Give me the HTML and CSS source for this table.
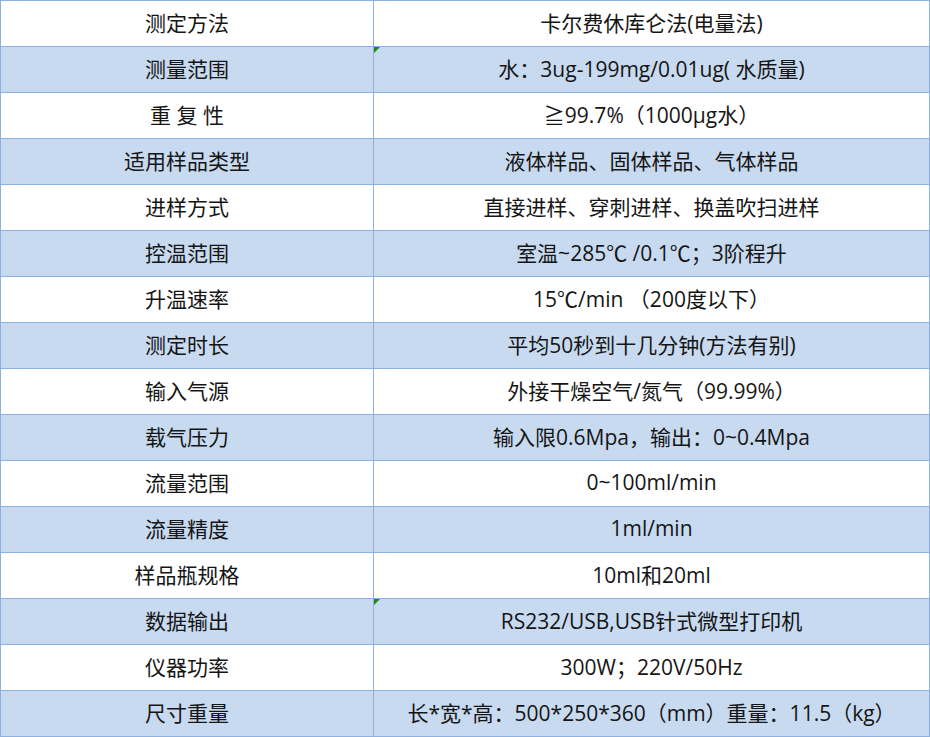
FILE: index.html
```html
<!DOCTYPE html>
<html lang="zh-CN">
<head>
<meta charset="utf-8">
<title>参数表</title>
<link rel="stylesheet" href="styles.css">
</head>
<body>
<div class="spec">
  <div class="cell">测定方法</div><div class="cell">卡尔费休库仑法(电量法)</div>
  <div class="cell alt">测量范围</div><div class="cell alt mark">水：3ug-199mg/0.01ug( 水质量)</div>
  <div class="cell">重 复 性</div><div class="cell">≧99.7%（1000μg水）</div>
  <div class="cell alt">适用样品类型</div><div class="cell alt">液体样品、固体样品、气体样品</div>
  <div class="cell">进样方式</div><div class="cell">直接进样、穿刺进样、换盖吹扫进样</div>
  <div class="cell alt">控温范围</div><div class="cell alt">室温~285℃ /0.1℃；3阶程升</div>
  <div class="cell">升温速率</div><div class="cell">15℃/min （200度以下）</div>
  <div class="cell alt">测定时长</div><div class="cell alt">平均50秒到十几分钟(方法有别)</div>
  <div class="cell">输入气源</div><div class="cell">外接干燥空气/氮气（99.99%）</div>
  <div class="cell alt">载气压力</div><div class="cell alt">输入限0.6Mpa，输出：0~0.4Mpa</div>
  <div class="cell">流量范围</div><div class="cell">0~100ml/min</div>
  <div class="cell alt">流量精度</div><div class="cell alt">1ml/min</div>
  <div class="cell">样品瓶规格</div><div class="cell">10ml和20ml</div>
  <div class="cell alt">数据输出</div><div class="cell alt mark">RS232/USB,USB针式微型打印机</div>
  <div class="cell">仪器功率</div><div class="cell">300W；220V/50Hz</div>
  <div class="cell alt">尺寸重量</div><div class="cell alt">长*宽*高：500*250*360（mm）重量：11.5（kg）</div>
</div>
</body>
</html>
```

FILE: styles.css
```css
html, body {
  margin: 0;
  padding: 0;
  background: #ffffff;
}

.spec {
  display: grid;
  grid-template-columns: 373px 556px;
  grid-auto-rows: 46px;
  width: 929px;
  border-top: 1px solid #8eb0e0;
  border-left: 1px solid #8eb0e0;
  font-family: "Open Sans", "Noto Sans CJK SC", sans-serif;
  font-size: 21px;
  color: #151515;
}

.cell {
  display: flex;
  align-items: center;
  justify-content: center;
  padding-bottom: 3px;
  border-right: 1px solid #8eb0e0;
  border-bottom: 1px solid #8eb0e0;
  background: #ffffff;
  white-space: nowrap;
  position: relative;
}

.cell.alt {
  background: #c7daf0;
}

.cell.mark::before {
  content: "";
  position: absolute;
  left: 0;
  top: 0;
  width: 0;
  height: 0;
  border-top: 6px solid #1a8a1a;
  border-right: 6px solid transparent;
}
```
